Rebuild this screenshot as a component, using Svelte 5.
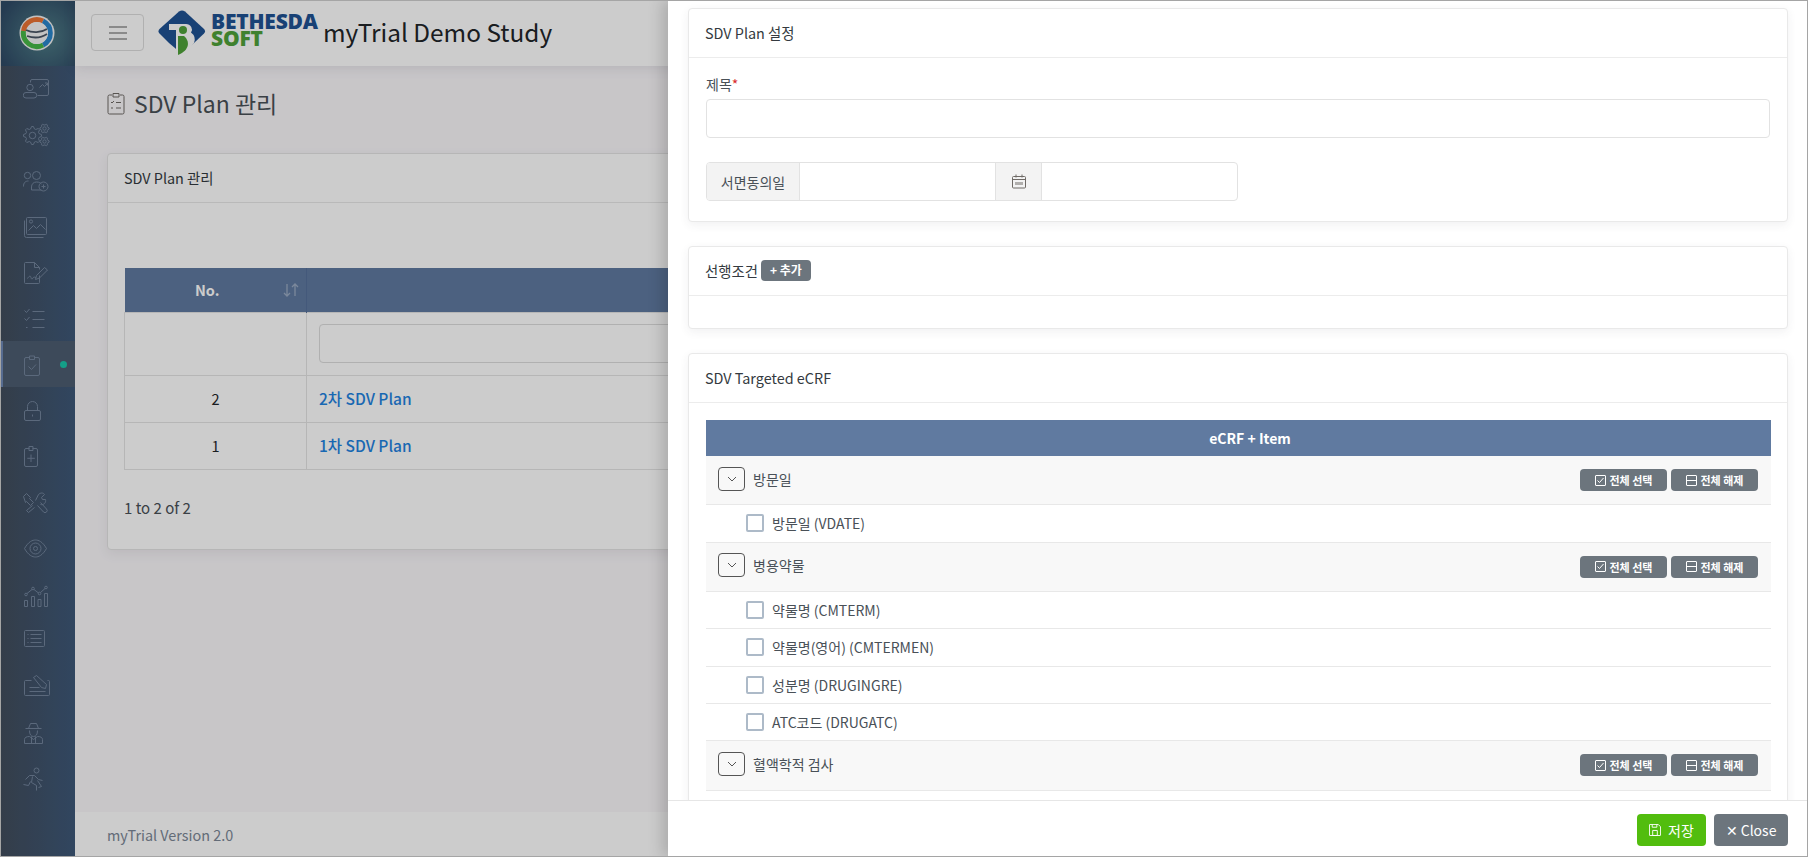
<script>
  const circle = (cx, cy, r) =>
    `M${cx - r} ${cy}a${r} ${r} 0 1 0 ${2 * r} 0a${r} ${r} 0 1 0 ${-2 * r} 0`;

  // gear outline for the settings icon
  function gear(cx, cy, r, teeth) {
    let d = '';
    const step = (Math.PI * 2) / (teeth * 4);
    for (let i = 0; i < teeth * 4; i++) {
      const rr = i % 4 < 2 ? r : r * 0.76;
      const x = cx + rr * Math.cos(i * step - step / 2);
      const y = cy + rr * Math.sin(i * step - step / 2);
      d += `${i ? 'L' : 'M'}${x.toFixed(1)} ${y.toFixed(1)}`;
    }
    return d + 'Z' + circle(cx, cy, r * 0.36);
  }

  const menu = [
    `M7 5V3.500a1.500 1.500 0 0 1 1.500-1.500h15A1.500 1.500 0 0 1 25 3.500v13a1.500 1.500 0 0 1-1.500 1.500H14M16 10l3-3 2 2 3-3M21.500 5.500H24V8${circle(6.5, 10, 3.2)}M2.500 15h8a2.500 2.500 0 0 1 0 5.500h-8a2.500 2.500 0 0 1 0-5.500Z`,
    gear(9, 12, 9, 8) + gear(21, 5, 4.6, 6) + gear(21, 18, 4.6, 6),
    `${circle(4, 6, 3.2)}${circle(13, 6, 4)}M0 17c0-4 2-5.500 5-5.500M8 20.500v-3c0-3 2-5 5-5s4 1 5 2M8 20.500h10${circle(20, 17, 4.5)}M20 15v4M18 17h4`,
    `M4 2h18a1 1 0 0 1 1 1v15a1 1 0 0 1-1 1H4a1 1 0 0 1-1-1V3a1 1 0 0 1 1-1ZM1 5v15a2 2 0 0 0 2 2h17M5 15l5-5 3 3 4-4 5 5${circle(7.5, 6, 1.6)}`,
    `M16 14v7a1 1 0 0 1-1 1H2a1 1 0 0 1-1-1V2a1 1 0 0 1 1-1h9l5 5v2M11 1v5h5M4 17c2-3 3-3 3.500-1s1 2 2 .5 1.500-1 3 0M13 14l8-8 3 2.500-8 8-4 1.500Z`,
    `M1 3l2 2 3-3.500M9 4h12M1 11l2 2 3-3.500M9 12h12M9 20h12M2.500 20h1.500`,
    `M6 4H2.500A1.500 1.500 0 0 0 1 5.500v15A1.500 1.500 0 0 0 2.500 22h12a1.500 1.500 0 0 0 1.500-1.500v-15A1.500 1.500 0 0 0 14.500 4H11M6 2.500h5V6H6ZM5 13l3 3 4.500-5`,
    `M2.500 11h13a1.500 1.500 0 0 1 1.500 1.500v7a1.500 1.500 0 0 1-1.500 1.500h-13A1.500 1.500 0 0 1 1 19.500v-7A1.500 1.500 0 0 1 2.500 11ZM4 11V7a5 5 0 0 1 10 0v4M9 15v2`,
    `M6 3H2.500A1.500 1.500 0 0 0 1 4.500v15A1.500 1.500 0 0 0 2.500 21h10a1.500 1.500 0 0 0 1.500-1.500v-15A1.500 1.500 0 0 0 12.500 3H9M5.500 1h4v4h-4ZM7.500 9v7.500M3.800 12.800h7.500`,
    `M3 2l4 4-1 1 4 4-3 3-4-4-1 1-2-6ZM17 11l6 6.500a2 2 0 0 1-3 3L14 14M12 9l3-6c2-2 5-2 6 0l-3 3 1 2 3 0c1 3-2 6-5 5M9 14l-6 5 2 2 6-5`,
    `M1 11C5 4 9 2.500 12 2.500S19 4 23 11c-4 7-8 8.500-11 8.500S5 18 1 11Z${circle(12, 11, 5.500)}${circle(12, 11, 2)}`,
    `M1 17h3v6H1ZM8 13h3v10H8ZM14.500 16h3v7h-3ZM21 10h3v13h-3Z${circle(2.500, 11, 1.300)}${circle(9.500, 5, 1.300)}${circle(16, 10, 1.300)}${circle(22.500, 4, 1.300)}M3.500 10l5-4M10.500 6l4.500 3.500M17 9l4.500-4`,
    `M2 1h18a1 1 0 0 1 1 1v14a1 1 0 0 1-1 1H2a1 1 0 0 1-1-1V2a1 1 0 0 1 1-1ZM7 5h11M7 9h11M7 13h11M4 5h1M4 9h1M4 13h1`,
    `M8 5H2a1 1 0 0 0-1 1v13a1 1 0 0 0 1 1h23a1 1 0 0 0 1-1V6a1 1 0 0 0-1-1h-1M6 12h10M6 16h16M10 2l3-2 10 9-1 4-4-1Z`,
    `M5 7l2-5h6l2 5M2 7h16M6 9c0 4 1.500 6 4 6s4-2 4-6M1 22v-4c0-2 2-3 5-3l4 3 4-3c3 0 5 1 5 3v4ZM8 15v7M12 15v7`,
    `${circle(13, 3, 2.500)}M2 12l4-4h5l4 4 4 1M9 9l-1 6 5 3v5M7 14l-2 4-5-1M14 13l4 6-3 1`,
  ];

  const sections = [
    { name: '방문일', items: ['방문일 (VDATE)'] },
    { name: '병용약물', items: ['약물명 (CMTERM)', '약물명(영어) (CMTERMEN)', '성분명 (DRUGINGRE)', 'ATC코드 (DRUGATC)'] },
    { name: '혈액학적 검사', items: [] },
  ];
</script>

<div class="page">
  <aside class="sidebar">
    <div class="brand">
      <svg width="36" height="36" viewBox="0 0 36 36">
        <circle cx="18" cy="18" r="17.500" fill="#f2f2f2" />
        <path d="M4.500 16A13.500 13.500 0 0 1 24 6" fill="none" stroke="#ec7434" stroke-width="5" />
        <path d="M24 6A13.500 13.500 0 0 1 24 30" fill="none" stroke="#2a86cc" stroke-width="5" />
        <path d="M24 30A13.500 13.500 0 0 1 4.500 16" fill="none" stroke="#48b848" stroke-width="5" />
        <circle cx="18" cy="18" r="11" fill="#f4f4f4" />
        <path d="M7 15c6 3 15 3 21-1M8 21c6 2 14 2 20-2" fill="none" stroke="#4a5564" stroke-width="1.800" />
      </svg>
    </div>
    <nav>
      {#each menu as d, i}
        <div class="menu-item" class:active={i === 6}>
          <svg width="27" height="24" viewBox="-0.500 -0.500 27 24"><path {d} /></svg>
          {#if i === 6}<span class="dot"></span>{/if}
        </div>
      {/each}
    </nav>
  </aside>

  <div class="main">
    <header class="topbar">
      <button class="burger" aria-label="menu"><span></span><span></span><span></span></button>
      <div class="logo">
        <svg width="48" height="46" viewBox="0 0 48 46">
          <path d="M21 1.500Q24-.5 27 1.500L46 19Q48 21 46 23.500L36 33 24 44 11 33 1.500 23.500Q-.5 21 1.500 19Z" fill="#1f5293" />
          <path d="M11 14H28a6 5.500 0 0 1 5 8.500 9 9 0 0 1 3 10.500L26 46H18V20H11Z" fill="#fff" />
          <circle cx="25" cy="20" r="4" fill="#4fa23a" />
          <path d="M20 26h6c6 5 6 14-6 19Z" fill="#4fa23a" />
        </svg>
        <div class="logo-text"><b>BETHESDA</b><b class="soft">SOFT</b></div>
      </div>
      <h1>myTrial Demo Study</h1>
    </header>

    <section class="content">
      <h2>
        <svg width="18" height="23" viewBox="0 0 18 23" fill="none" stroke="#6f6a66">
          <path d="M5 3H2.500A1.500 1.500 0 0 0 1 4.500v16A1.500 1.500 0 0 0 2.500 22h13a1.500 1.500 0 0 0 1.500-1.500v-16A1.500 1.500 0 0 0 15.500 3H13M6 1.500h6V5H6ZM4 10l1 1 2-2M9 10.500h5M4 16h2M9 16h5" />
        </svg>
        SDV Plan 관리
      </h2>
      <div class="list-card">
        <div class="list-head">SDV Plan 관리</div>
        <div class="list-body">
          <table>
            <thead>
              <tr>
                <th class="no">No.
                  <svg class="sort" width="16" height="16" viewBox="0 0 16 16"><path d="M4 2v12M1 11l3 3 3-3M12 14V2M9 5l3-3 3 3" /></svg>
                </th>
                <th></th>
              </tr>
            </thead>
            <tbody>
              <tr class="filter"><td></td><td><div class="filter-input"></div></td></tr>
              <tr><td class="num">2</td><td><a href="#plan2">2차 SDV Plan</a></td></tr>
              <tr><td class="num">1</td><td><a href="#plan1">1차 SDV Plan</a></td></tr>
            </tbody>
          </table>
          <p class="count">1 to 2 of 2</p>
        </div>
      </div>
    </section>

    <footer class="version">myTrial Version 2.0</footer>
  </div>

  <div class="dim"></div>

  <div class="panel">
    <div class="panel-body">
      <div class="card">
        <div class="card-head">SDV Plan 설정</div>
        <div class="card-main">
          <label for="title">제목<em>*</em></label>
          <input id="title" class="text" />
          <div class="group">
            <span class="addon name">서면동의일</span>
            <span class="field"></span>
            <span class="addon cal">
              <svg width="14" height="15" viewBox="0 0 14 15" fill="none" stroke="#6f6a66">
                <path d="M1.500 2.500h11a1 1 0 0 1 1 1v9.500a1 1 0 0 1-1 1h-11a1 1 0 0 1-1-1V3.500a1 1 0 0 1 1-1ZM.5 5.500h13M4 .5v3M10 .5v3M4 8v3M6 8v3M8 8v3M10 8v3" />
              </svg>
            </span>
            <span class="field"></span>
          </div>
        </div>
      </div>

      <div class="card">
        <div class="card-head">선행조건 <span class="add">+ 추가</span></div>
        <div class="card-empty"></div>
      </div>

      <div class="card">
        <div class="card-head">SDV Targeted eCRF</div>
        <div class="card-table">
          <div class="ecrf-title">eCRF + Item</div>
          {#each sections as s}
            <div class="sec-row">
              <span class="toggle">
                <svg width="10" height="6" viewBox="0 0 10 6"><path d="M1 1l4 4 4-4" /></svg>
              </span>
              <span class="sec-name">{s.name}</span>
              <span class="sec-btns">
                <span class="mini">
                  <svg width="11" height="11" viewBox="0 0 11 11"><path d="M1 .5h9a.5.5 0 0 1 .5.500v9a.5.5 0 0 1-.5.500H1a.5.5 0 0 1-.5-.500V1A.5.5 0 0 1 1 .5ZM2.500 5.500l2 2 4-4.500" /></svg>
                  전체 선택
                </span>
                <span class="mini">
                  <svg width="11" height="11" viewBox="0 0 11 11"><path d="M1 .5h9a.5.5 0 0 1 .5.500v9a.5.5 0 0 1-.5.500H1a.5.5 0 0 1-.5-.500V1A.5.5 0 0 1 1 .5ZM.5 5.500h10" /></svg>
                  전체 해제
                </span>
              </span>
            </div>
            {#each s.items as item}
              <div class="item-row"><span class="check"></span>{item}</div>
            {/each}
          {/each}
        </div>
      </div>
    </div>

    <div class="panel-foot">
      <button class="save">
        <svg width="12" height="12" viewBox="0 0 13 13" fill="none" stroke="#fff">
          <path d="M1 .5h9l2.500 2.500v9a.5.5 0 0 1-.5.500H1a.5.5 0 0 1-.5-.500V1A.5.5 0 0 1 1 .5ZM3.500.5v3h5v-3M4 7h5v5.500H4Z" />
        </svg>
        저장
      </button>
      <button class="close">✕ Close</button>
    </div>
  </div>
</div>

<style>
  :global(body) {
    margin: 0;
    font-family: "Noto Sans CJK KR", "Noto Sans", sans-serif;
    font-size: 14px;
    color: #343a40;
  }

  * {
    box-sizing: border-box;
  }

  .page {
    position: relative;
    display: flex;
    width: 1808px;
    height: 857px;
    overflow: hidden;
    background: #faf8fb;
  }

  .page::after {
    content: '';
    position: absolute;
    inset: 0;
    border: 1px solid #a5a5a5;
    pointer-events: none;
    z-index: 5;
  }

  /* left menu */
  .sidebar {
    width: 75px;
    flex: none;
    background: linear-gradient(90deg, #414d5c, #3e5878);
  }

  .brand {
    height: 66px;
    display: flex;
    align-items: center;
    padding-left: 19px;
    background: radial-gradient(circle at 60% 55%, #4e7d86, #2f4a66 85%);
  }

  nav {
    margin-top: -1px;
  }

  .menu-item {
    position: relative;
    height: 46px;
    display: flex;
    align-items: center;
    padding-left: 23px;
    padding-top: 2px;
  }

  .menu-item.active {
    background: #4d5d71;
    border-left: 3px solid #6d88b5;
    padding-left: 20px;
  }

  .menu-item path {
    fill: none;
    stroke: #72849c;
    stroke-width: 1;
  }

  .dot {
    position: absolute;
    left: 57px;
    top: 20px;
    width: 7px;
    height: 7px;
    border-radius: 50%;
    background: #19c7aa;
  }

  /* page behind the panel */
  .main {
    flex: 1;
    display: flex;
    flex-direction: column;
    min-width: 0;
  }

  .topbar {
    height: 66px;
    flex: none;
    display: flex;
    align-items: center;
    padding-left: 16px;
    background: #fff;
    box-shadow: 0 2px 12px rgba(60, 50, 70, 0.12);
  }

  .burger {
    width: 53px;
    height: 37px;
    margin-top: -1px;
    display: flex;
    flex-direction: column;
    align-items: center;
    justify-content: center;
    gap: 4px;
    background: none;
    border: 1px solid #dcdcdc;
    border-radius: 4px;
  }

  .burger span {
    width: 18px;
    height: 2px;
    background: #adadad;
  }

  .logo {
    display: flex;
    align-items: center;
    gap: 5px;
    margin-left: 14px;
  }

  .logo-text {
    display: flex;
    flex-direction: column;
    font-family: "Open Sans", sans-serif;
    font-size: 21px;
    line-height: 17px;
    letter-spacing: -0.2px;
    color: #1f5293;
    margin-top: -7px;
  }

  .logo-text b {
    font-weight: 800;
    height: 17px;
  }

  .soft {
    color: #4fa23a;
  }

  h1 {
    margin: -4px 0 0 5px;
    font-size: 24.400px;
    font-weight: 400;
    color: #212529;
  }

  .content {
    flex: 1;
    padding: 0 32px;
  }

  h2 {
    height: 87px;
    margin: 0;
    padding-bottom: 13px;
    display: flex;
    align-items: center;
    gap: 9px;
    font-size: 23px;
    font-weight: 400;
    color: #495057;
  }

  .list-card {
    height: 397px;
    background: #fff;
    border: 1px solid #e4e4e4;
    border-radius: 4px;
    box-shadow: 0 4px 12px rgba(60, 50, 70, 0.08);
  }

  .list-head {
    height: 49px;
    padding: 0 0 2px 16px;
    display: flex;
    align-items: center;
    font-size: 14.400px;
    color: #343a40;
    border-bottom: 1px solid #e8e8e8;
  }

  .list-body {
    padding: 65px 16px 0;
  }

  table {
    width: 1300px;
    border-collapse: collapse;
    table-layout: fixed;
  }

  th {
    height: 44px;
    background: #607aa0;
    color: #fff;
    border: 0 solid #56709a;
    border-right-width: 1px;
    font-size: 14.500px;
    font-weight: 700;
    position: relative;
  }

  th.no {
    width: 182px;
    padding-right: 17px;
  }

  .sort {
    position: absolute;
    right: 7px;
    top: 14px;
  }

  .sort path {
    fill: none;
    stroke: #9aabc3;
    stroke-width: 1.300;
  }

  td {
    height: 47px;
    padding: 0 12px;
    border: 1px solid #e4e4e4;
  }

  .filter td {
    height: 63px;
  }

  .filter-input {
    height: 39px;
    border: 1px solid #dcdcdc;
    border-radius: 4px;
  }

  .num {
    text-align: center;
    color: #212529;
    font-size: 14.500px;
  }

  td a {
    position: relative;
    top: -1px;
    color: #1f82e0;
    text-decoration: none;
    font-size: 15.500px;
    font-weight: 500;
  }

  .count {
    margin: 27px 0 0;
    font-size: 15px;
    color: #495057;
  }

  .version {
    height: 45px;
    flex: none;
    padding-left: 32px;
    display: flex;
    align-items: center;
    background: #fff;
    font-size: 14.400px;
    color: #7c8796;
  }

  .dim {
    position: absolute;
    inset: 0;
    background: rgba(0, 0, 0, 0.2);
  }

  /* right slide panel */
  .panel {
    position: absolute;
    top: 0;
    right: 0;
    bottom: 0;
    width: 1140px;
    display: flex;
    flex-direction: column;
    background: #fff;
    box-shadow: -6px 0 14px rgba(0, 0, 0, 0.16);
  }

  .panel-body {
    flex: 1;
    min-height: 0;
    overflow: hidden;
    padding: 8px 20px 0;
  }

  .card {
    background: #fff;
    border: 1px solid #e9e9e9;
    border-radius: 4px;
    box-shadow: 0 3px 10px rgba(60, 60, 70, 0.07);
    margin-bottom: 24px;
  }

  .card-head {
    height: 49px;
    padding: 0 0 2px 16px;
    display: flex;
    align-items: center;
    gap: 2px;
    font-size: 14.400px;
    color: #343a40;
    border-bottom: 1px solid #ececec;
  }

  .add {
    height: 21px;
    padding: 0 9px;
    margin: 0 0 0 1px;
    border-radius: 4px;
    background: #6c757d;
    color: #fff;
    font-size: 12px;
    font-weight: 700;
    line-height: 20px;
  }

  .card-main {
    padding: 15px 17px 20px;
  }

  label {
    display: block;
    height: 26px;
    line-height: 22px;
    color: #495057;
  }

  em {
    color: #d92c2c;
    font-style: normal;
  }

  .text {
    display: block;
    width: 100%;
    height: 39px;
    border: 1px solid #e2e2e2;
    border-radius: 4px;
    outline: none;
  }

  .group {
    display: flex;
    width: 532px;
    height: 39px;
    margin-top: 24px;
    border: 1px solid #e2e2e2;
    border-radius: 4px;
    overflow: hidden;
  }

  .addon {
    display: flex;
    align-items: center;
    justify-content: center;
    background: #f3f3f3;
    color: #495057;
    flex: none;
  }

  .name {
    width: 93px;
    border-right: 1px solid #e2e2e2;
  }

  .cal {
    width: 47px;
    border-left: 1px solid #e2e2e2;
    border-right: 1px solid #e2e2e2;
  }

  .field {
    flex: 1;
  }

  .card-empty {
    height: 32px;
  }

  .card-table {
    padding: 17px 16px 60px 17px;
  }

  .ecrf-title {
    height: 36px;
    padding-left: 23px;
    display: flex;
    align-items: center;
    justify-content: center;
    background: #607aa0;
    color: #fff;
    font-weight: 700;
  }

  .sec-row {
    height: 49.200px;
    display: flex;
    align-items: center;
    padding: 0 13px 0 12px;
    background: #f8f8f8;
    border-bottom: 1px solid #e8e8e8;
  }

  .toggle {
    width: 27px;
    height: 24px;
    display: flex;
    align-items: center;
    justify-content: center;
    border: 1px solid #555;
    border-radius: 4px;
    margin-top: -3px;
  }

  .toggle path {
    fill: none;
    stroke: #555;
  }

  .sec-name {
    margin: -3px 0 0 8px;
    color: #495057;
  }

  .sec-btns {
    margin-left: auto;
    display: flex;
    gap: 4px;
  }

  .mini {
    width: 87px;
    height: 22px;
    display: flex;
    align-items: center;
    justify-content: center;
    gap: 4px;
    background: #6c757d;
    color: #fff;
    border-radius: 4px;
    font-size: 11px;
    font-weight: 700;
  }

  .mini path {
    fill: none;
    stroke: #fff;
  }

  .item-row {
    height: 37.400px;
    display: flex;
    align-items: center;
    padding-left: 40px;
    border-bottom: 1px solid #e8e8e8;
    color: #495057;
  }

  .check {
    width: 18px;
    height: 18px;
    margin-right: 8px;
    border: 2px solid #adbac8;
    border-radius: 2px;
  }

  .panel-foot {
    height: 57px;
    flex: none;
    display: flex;
    align-items: flex-start;
    justify-content: flex-end;
    gap: 8px;
    padding: 13px 20px 0 0;
    background: #fff;
    border-top: 1px solid #e6e6e6;
  }

  .panel-foot button {
    height: 32px;
    border: 0;
    border-radius: 4px;
    color: #fff;
    font-family: inherit;
    font-size: 14px;
    display: flex;
    align-items: center;
    justify-content: center;
    gap: 7px;
  }

  .save {
    width: 69px;
    background: #52bd0e;
  }

  .close {
    width: 74px;
    background: #6c757d;
  }
</style>
